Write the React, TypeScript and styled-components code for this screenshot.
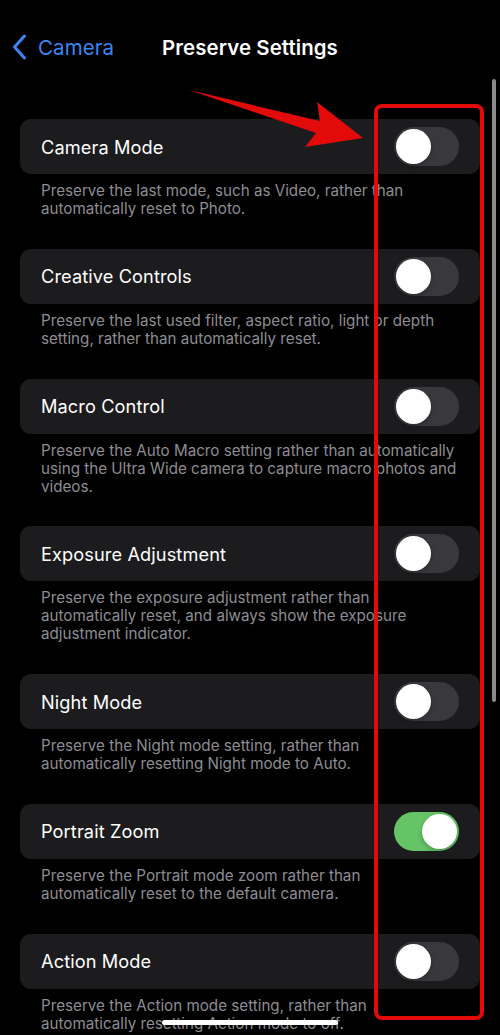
import React from 'react';
import styled, { createGlobalStyle } from 'styled-components';

const GlobalStyle = createGlobalStyle`
  html, body {
    margin: 0;
    padding: 0;
    background: #000;
  }
  body {
    font-family: Inter, "Noto Sans", "Liberation Sans", sans-serif;
    -webkit-font-smoothing: antialiased;
  }
`;

const Screen = styled.div`
  position: relative;
  width: 500px;
  height: 1035px;
  overflow: hidden;
  background: #000;
  color: #fff;
`;

const NavBar = styled.div`
  position: relative;
  display: flex;
  align-items: center;
  justify-content: center;
  height: 44px;
  margin-top: 25px;
`;

const BackButton = styled.div`
  position: absolute;
  left: 12px;
  top: 0;
  bottom: 0;
  display: flex;
  align-items: center;
  gap: 11px;
  color: #3d85f5;
  font-size: 20.5px;
  letter-spacing: 0.1px;
`;

const Title = styled.div`
  font-size: 20.4px;
  font-weight: 600;
  letter-spacing: 0.1px;
`;

const List = styled.div`
  display: flex;
  flex-direction: column;
  padding: 50px 20px 0;
`;

const Group = styled.div`
  display: flex;
  flex-direction: column;
  margin-bottom: 30.8px;
`;

const Card = styled.div`
  display: flex;
  align-items: center;
  justify-content: space-between;
  height: 55px;
  padding: 0 21px;
  background: #1c1c1e;
  border-radius: 11px;
`;

const Label = styled.div`
  font-size: 18.2px;
  letter-spacing: 0.1px;
`;

const Track = styled.div<{ $on: boolean }>`
  display: flex;
  align-items: center;
  justify-content: ${p => (p.$on ? 'flex-end' : 'flex-start')};
  width: 65px;
  height: 39px;
  padding: 0 2px;
  box-sizing: border-box;
  border-radius: 20px;
  background: ${p => (p.$on ? '#65c466' : '#39393d')};
`;

const Knob = styled.div`
  width: 35px;
  height: 35px;
  border-radius: 50%;
  background: #fff;
  box-shadow: 0 2px 5px rgba(0, 0, 0, 0.25);
`;

const Footer = styled.div`
  padding: 8px 21px 0;
  color: #8d8d93;
  font-size: 15.2px;
  line-height: 18px;
`;

const Line = styled.div`
  white-space: nowrap;
`;

const ScrollBar = styled.div`
  position: absolute;
  left: 492px;
  top: 79px;
  width: 4px;
  height: 623px;
  border-radius: 2px;
  background: #8a8a8c;
`;

const HomeIndicator = styled.div`
  position: absolute;
  left: 162px;
  bottom: 10px;
  width: 176px;
  height: 5px;
  border-radius: 3px;
  background: #fff;
`;

const Markup = styled.svg`
  position: absolute;
  left: 0;
  top: 0;
  pointer-events: none;
`;

const settings = [
  {
    label: 'Camera Mode',
    on: false,
    lines: ['Preserve the last mode, such as Video, rather than', 'automatically reset to Photo.'],
  },
  {
    label: 'Creative Controls',
    on: false,
    lines: ['Preserve the last used filter, aspect ratio, light or depth', 'setting, rather than automatically reset.'],
  },
  {
    label: 'Macro Control',
    on: false,
    lines: [
      'Preserve the Auto Macro setting rather than automatically',
      'using the Ultra Wide camera to capture macro photos and',
      'videos.',
    ],
  },
  {
    label: 'Exposure Adjustment',
    on: false,
    lines: [
      'Preserve the exposure adjustment rather than',
      'automatically reset, and always show the exposure',
      'adjustment indicator.',
    ],
  },
  {
    label: 'Night Mode',
    on: false,
    lines: ['Preserve the Night mode setting, rather than', 'automatically resetting Night mode to Auto.'],
  },
  {
    label: 'Portrait Zoom',
    on: true,
    lines: ['Preserve the Portrait mode zoom rather than', 'automatically reset to the default camera.'],
  },
  {
    label: 'Action Mode',
    on: false,
    lines: ['Preserve the Action mode setting, rather than', 'automatically resetting Action mode to off.'],
  },
];

const Chevron = () => (
  <svg width="15" height="26" viewBox="0 0 15 26">
    <path d="M12.5 2 L2.5 13 L12.5 24" fill="none" stroke="#3d85f5" strokeWidth="3" strokeLinecap="round" strokeLinejoin="round" />
  </svg>
);

const App = () => (
  <Screen>
    <GlobalStyle />
    <NavBar>
      <BackButton>
        <Chevron />
        <span>Camera</span>
      </BackButton>
      <Title>Preserve Settings</Title>
    </NavBar>
    <List>
      {settings.map(s => (
        <Group key={s.label}>
          <Card>
            <Label>{s.label}</Label>
            <Track $on={s.on}>
              <Knob />
            </Track>
          </Card>
          <Footer>
            {s.lines.map(l => (
              <Line key={l}>{l}</Line>
            ))}
          </Footer>
        </Group>
      ))}
    </List>
    <ScrollBar />
    <Markup width="500" height="1035" viewBox="0 0 500 1035">
      <polygon points="189,90 320,121 317,102 363,138 305,147 316,133" fill="#e30a0a" />
      <rect x="376" y="106" width="106" height="912" rx="6" fill="none" stroke="#e30a0a" strokeWidth="4" />
    </Markup>
    <HomeIndicator />
  </Screen>
);

export default App;
